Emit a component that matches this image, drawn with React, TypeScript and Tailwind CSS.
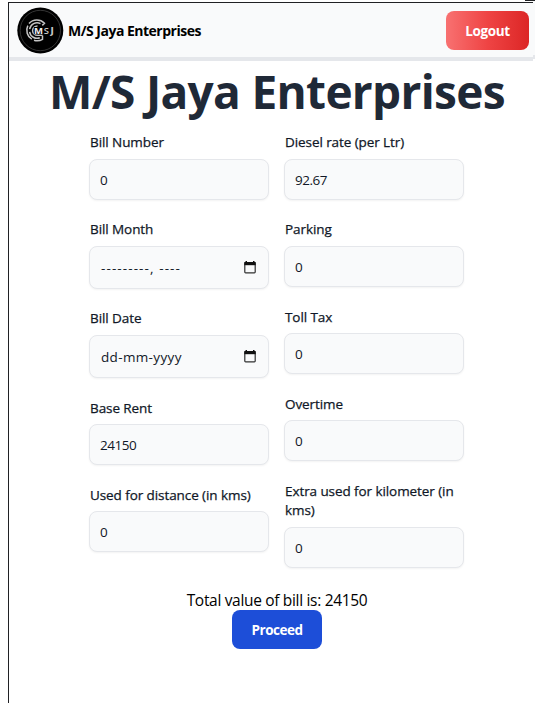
import type { ReactNode } from "react";

function CalendarIcon() {
  return (
    <svg width="12" height="13" viewBox="0 0 12 13" className="shrink-0">
      <rect x="0.8" y="2" width="10.4" height="9.9" rx="0.8" fill="none" stroke="#303030" strokeWidth="1.2" />
      <rect x="0.3" y="1" width="11.4" height="3.2" fill="#101010" />
      <rect x="1.5" y="0" width="1.5" height="2" fill="#101010" />
      <rect x="9" y="0" width="1.5" height="2" fill="#101010" />
    </svg>
  );
}

type FieldProps = {
  label: ReactNode;
  value: string;
  labelClass?: string;
  valueClass?: string;
  picker?: boolean;
};

function Field({ label, value, labelClass = "h-[19px] pt-px", valueClass = "tracking-[-0.5px]", picker = false }: FieldProps) {
  return (
    <div className="mb-[19px]">
      <div className={`mb-2 pl-px text-[13.5px] leading-[19px] font-medium tracking-[-0.08px] whitespace-nowrap text-gray-900 [-webkit-text-stroke:0.25px_#111827] ${labelClass}`}>
        {label}
      </div>
      <div
        className={`flex items-center justify-between rounded-lg border border-[#e5e7eb] bg-[#f9fafb] pr-3 text-[13.5px] text-[#111827] shadow-xs ${
          picker ? "h-[43px] pl-[11px]" : "h-[41px] pl-[10px]"
        }`}
      >
        <span className={`pt-px whitespace-nowrap ${valueClass}`}>{value}</span>
        {picker && <CalendarIcon />}
      </div>
    </div>
  );
}

function Logo() {
  return (
    <svg width="47" height="47" viewBox="0 0 47 47" className="shrink-0">
      <circle cx="23.3" cy="23.5" r="23" fill="#000" />
      <circle cx="23.3" cy="23.5" r="20.2" fill="none" stroke="#4a4a4a" strokeWidth="0.7" />
      <g fill="none" stroke="#c4c4c4" strokeWidth="1.5">
        <path d="M12 16.5A10.6 10.6 0 0 1 27.5 16.2L25.3 18.4" />
        <path d="M10.8 18.6A10.6 10.6 0 0 0 14.8 32.2" />
        <path d="M17 33.3A10.6 10.6 0 0 0 25.5 32.4V28.6" />
        <path d="M23.5 16.6A7.6 7.6 0 0 0 12.6 22.2" />
        <path d="M12.6 24.8A7.6 7.6 0 0 0 22.8 30.8" />
        <path d="M20.5 18.9A4.9 4.9 0 0 0 15.6 23.6A4.9 4.9 0 0 0 20.5 28.3H25.5" />
      </g>
      <rect x="16.8" y="20" width="9" height="7.3" fill="#000" />
      <text x="17" y="26.7" fontSize="8.8" fontWeight="700" textLength="9" lengthAdjust="spacingAndGlyphs" fill="#f0f0f0" fontFamily="Open Sans, sans-serif">M</text>
      <text x="26.8" y="26.7" fontSize="8.8" fontWeight="600" textLength="5.2" lengthAdjust="spacingAndGlyphs" fill="#c8c8c8" fontFamily="Open Sans, sans-serif">S</text>
      <text x="33.5" y="26.7" fontSize="8.8" fontWeight="600" fill="#c8c8c8" fontFamily="DejaVu Sans, sans-serif">J</text>
    </svg>
  );
}

export default function App() {
  return (
    <div className="flex h-[720px] w-[540px] items-start overflow-hidden bg-white pl-2 font-['Open_Sans','Noto_Sans',sans-serif] text-black">
      <div className="mt-0.5 h-[701px] w-[525px] shrink-0 border-l border-[#202124]">
        <header className="flex h-[59px] items-center justify-between border-t border-b-4 border-t-[#202124] border-b-[#e5e7eb] bg-[#f9fafb] pr-1 pl-2">
          <div className="flex items-center gap-1">
            <Logo />
            <span className="pt-0.5 text-[14px] leading-5 font-bold tracking-[-0.5px] whitespace-nowrap">M/S Jaya Enterprises</span>
          </div>
          <button className="mt-[3px] mb-[2px] h-[39px] w-[83px] rounded-lg bg-linear-to-r/srgb from-[#f87171] via-[#ef4444] to-[#dc2626] pt-0.5 text-[13.5px] font-bold tracking-[-0.4px] text-white">
            Logout
          </button>
        </header>
        <h1 className="ml-[40px] h-[71px] text-[46px] leading-[61px] font-bold tracking-[-0.68px] whitespace-nowrap text-[#1f2937]">
          M/S Jaya Enterprises
        </h1>
        <main className="ml-[80px] grid w-[375px] grid-cols-2 gap-x-[15px]">
          <div>
            <Field label="Bill Number" value="0" />
            <Field label="Bill Month" value="---------, ----" picker valueClass="tracking-[1.1px]" />
            <Field label="Bill Date" value="dd-mm-yyyy" picker valueClass="tracking-[0.35px]" />
            <Field label="Base Rent" value="24150" labelClass="h-[19px] pt-[2px]" />
            <Field label="Used for distance (in kms)" value="0" labelClass="h-[19px] pt-[2px]" />
          </div>
          <div>
            <Field label="Diesel rate (per Ltr)" value="92.67" />
            <Field label="Parking" value="0" />
            <Field label="Toll Tax" value="0" labelClass="h-[19px] pt-[2px]" />
            <Field label="Overtime" value="0" labelClass="h-[19px] pt-[2px]" />
            <Field label={<>Extra used for kilometer (in<br />kms)</>} value="0" labelClass="h-[39px] pt-[2px]" />
          </div>
        </main>
        <div className="mt-[2px] flex w-[536px] flex-col items-center">
          <p className="h-[21px] text-[15.5px] leading-[22px] tracking-[-0.32px] whitespace-nowrap">Total value of bill is: 24150</p>
          <button className="h-[39px] w-[90px] rounded-lg bg-[#1d4ed8] pt-0.5 text-[13.5px] font-bold tracking-[-0.5px] text-white">Proceed</button>
        </div>
      </div>
      <div className="-ml-2 h-px w-[10px] shrink-0 bg-[#202124]" />
      <div className="-ml-0.5 mt-px h-[58px] w-0.5 shrink-0 border-b-4 border-[#e5e7eb] bg-[#f9fafb]" />
    </div>
  );
}
